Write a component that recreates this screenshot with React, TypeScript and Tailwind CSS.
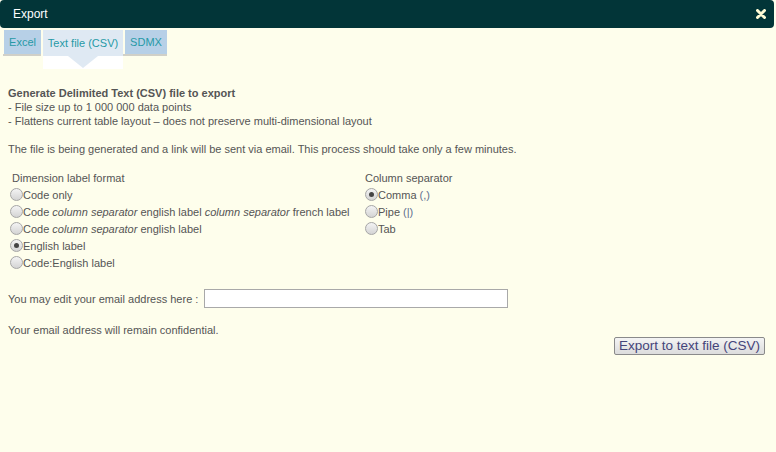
import React from 'react';

function Radio({ checked }: { checked?: boolean }) {
  return (
    <span className="inline-flex w-[13px] h-[13px] shrink-0 items-center justify-center rounded-full border border-[#a6a6a6] bg-gradient-to-b from-[#f4f4f4] to-[#d4d4d4]">
      {checked && <span className="w-[5px] h-[5px] rounded-full bg-[#444]" />}
    </span>
  );
}

function Option({ checked, children }: { checked?: boolean; children: React.ReactNode }) {
  return (
    <div className="flex items-center h-[17px] whitespace-nowrap">
      <Radio checked={checked} />
      <span>{children}</span>
    </div>
  );
}

export default function App() {
  return (
    <div className="w-[776px] h-[452px] bg-[#fefeec] font-['Liberation_Sans',Arial,sans-serif] text-[11px] leading-[14px] text-[#555] overflow-hidden">
      {/* Title bar */}
      <div className="w-[774px] h-[28px] bg-[#023538] rounded-[4px] flex items-center justify-between pl-[13px] pr-[8px]">
        <span className="text-white text-[12px]">Export</span>
        <svg width="10" height="10" viewBox="0 0 10 10">
          <path d="M1.5 1.5 L8.5 8.5 M8.5 1.5 L1.5 8.5" stroke="#fffbd6" strokeWidth="3" strokeLinecap="round" />
        </svg>
      </div>

      {/* Tabs */}
      <div className="flex items-start pl-[3px] pt-[2px] h-[41px]">
        <div className="pl-[1px] border-b-2 border-[#d0d0c8] h-[26px]">
          <div className="h-[24px] w-[37px] bg-[#b7d0e7] text-[#2699a6] flex items-center justify-center">Excel</div>
        </div>
        <div className="ml-[2px] flex flex-col">
          <div className="h-[26px] w-[80px] bg-[#dfe9f3] text-[#2699a6] flex items-center justify-center">Text file (CSV)</div>
          <div className="h-[13px] w-[80px] bg-white flex justify-center">
            <svg width="30" height="13" viewBox="0 0 30 13">
              <path d="M0 0 L30 0 L15 12 Z" fill="#dfe9f3" />
            </svg>
          </div>
        </div>
        <div className="pl-[2px] border-b-2 border-[#d0d0c8] h-[26px]">
          <div className="h-[24px] w-[42px] bg-[#b7d0e7] text-[#2699a6] flex items-center justify-center">SDMX</div>
        </div>
      </div>

      {/* Body */}
      <div className="px-[8px] pt-[17px]">
        <div className="font-bold">Generate Delimited Text (CSV) file to export</div>
        <div>- File size up to 1 000 000 data points</div>
        <div>- Flattens current table layout – does not preserve multi-dimensional layout</div>
        <div className="mt-[14px]">The file is being generated and a link will be sent via email. This process should take only a few minutes.</div>

        <div className="flex mt-[15px] pl-[2px]">
          <div className="w-[355px]">
            <div className="pl-[2px] h-[15px]">Dimension label format</div>
            <Option>Code only</Option>
            <Option>
              Code <i>column separator</i> english label <i>column separator</i> french label
            </Option>
            <Option>
              Code <i>column separator</i> english label
            </Option>
            <Option checked>English label</Option>
            <Option>Code:English label</Option>
          </div>
          <div>
            <div className="h-[15px]">Column separator</div>
            <Option checked>
              Comma <span className="text-[#5f6f8f]">(,)</span>
            </Option>
            <Option>
              Pipe <span className="text-[#5f6f8f]">(|)</span>
            </Option>
            <Option>Tab</Option>
          </div>
        </div>

        <div className="flex items-center mt-[18px]">
          <span>You may edit your email address here :</span>
          <input className="ml-[6px] w-[304px] h-[19px] border border-[#a9a9a9] bg-white outline-none" />
        </div>
        <div className="mt-[15px]">Your email address will remain confidential.</div>

        <div className="flex justify-end pr-[3px]">
          <button className="h-[18px] px-[4px] border border-[#8a8a8a] bg-gradient-to-b from-[#f4f4f4] to-[#dcdcdc] text-[#44447a] text-[13.5px] leading-[16px] rounded-[2px]">
            Export to text file (CSV)
          </button>
        </div>
      </div>
    </div>
  );
}
